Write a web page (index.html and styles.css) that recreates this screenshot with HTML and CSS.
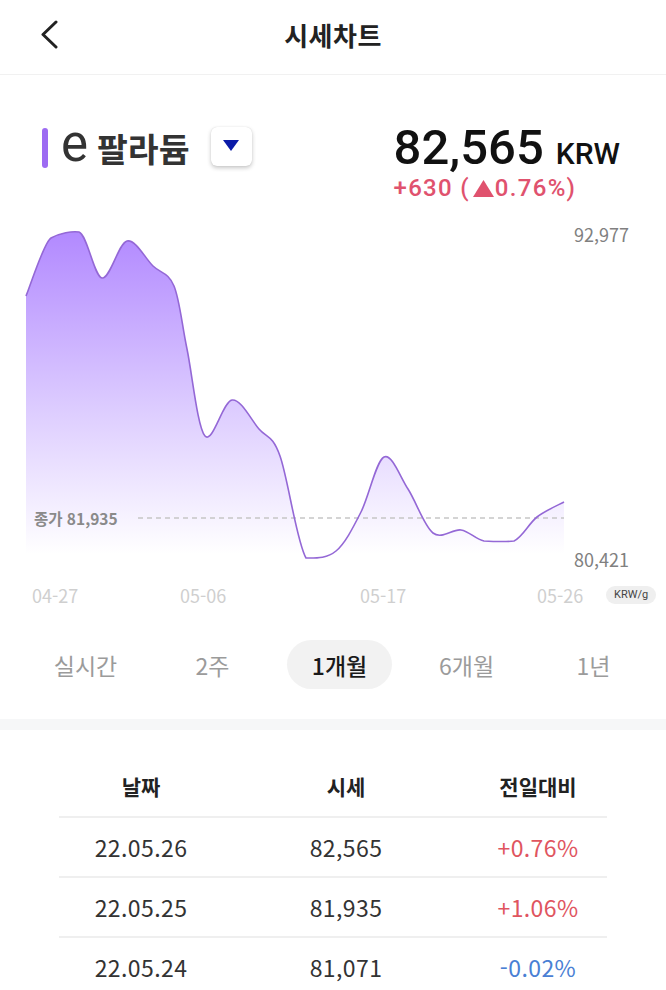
FILE: index.html
```html
<!DOCTYPE html>
<html lang="ko">
<head>
  <meta charset="UTF-8">
  <meta name="viewport" content="width=device-width, initial-scale=1.0">
  <title>시세차트</title>
  <link rel="stylesheet" href="styles.css">
</head>
<body>

  <header class="topbar">
    <a class="back" href="#">
      <svg width="20" height="30" viewBox="0 0 20 30"><path d="M16 3 L3 15.5 L16 28" fill="none" stroke="#222" stroke-width="3" stroke-linecap="round" stroke-linejoin="round"/></svg>
    </a>
    <h1>시세차트</h1>
  </header>

  <section class="asset">
    <div class="asset-name">
      <span class="asset-bar"></span>
      <span class="asset-e">e</span>
      <span class="asset-title">팔라듐</span>
      <button class="asset-select">
        <svg width="16" height="12" viewBox="0 0 16 12"><path d="M0 0 H16 L8 11 Z" fill="#0b1ba8"/></svg>
      </button>
    </div>
    <div class="asset-price">
      <div class="price-main"><span class="price-value">82,565</span><span class="price-unit">KRW</span></div>
      <div class="price-change">+630 (<svg class="tri" width="21" height="17" viewBox="0 0 21 17"><path d="M10.5 0 L21 17 H0 Z" fill="#e0526e"/></svg>0.76%)</div>
    </div>
  </section>

  <section class="chart">
    <svg class="chart-svg" width="666" height="400" viewBox="0 0 666 400">
      <defs>
        <linearGradient id="fill" x1="0" y1="10" x2="0" y2="340" gradientUnits="userSpaceOnUse">
          <stop offset="0" stop-color="#b086ff"/>
          <stop offset="0.55" stop-color="#dccbff"/>
          <stop offset="1" stop-color="#ffffff"/>
        </linearGradient>
      </defs>
      <path d="M26,82 C30.2,72.3 44,28 51,24 C60,19 72,17 79,18 C87.5,21 94,62.5 102,64 C110,65.5 118.5,29 127,27 C135.5,25 145.2,44.5 153,52 C160.8,59.5 168.3,58.2 174,72 C179.7,85.8 181.8,110 187,135 C192.2,160 197.5,213.5 205,222 C212.5,230.5 223,187.2 232,186 C241,184.8 251,205.7 259,215 C267,224.3 272.2,220.5 280,242 C287.8,263.5 296.7,328.2 306,344 C316,344 326.8,344.7 336,337 C345.2,329.3 353,313.7 361,298 C369,282.3 376.2,246.8 384,243 C391.8,239.2 399.8,262.3 408,275 C416.2,287.7 424.2,312.2 433,319 C441.8,325.8 452.5,314.7 461,316 C469.5,317.3 475.2,325.2 484,327 C492.8,327.5 505,328 514,327 C522.8,323 528.7,309.5 537,303 C545.3,296.5 559.5,290.5 564,288 L564,345 L26,345 Z" fill="url(#fill)"/>
      <line x1="138" y1="304" x2="564" y2="304" stroke="#c6c6c6" stroke-width="1.3" stroke-dasharray="5 4"/>
      <path d="M26,82 C30.2,72.3 44,28 51,24 C60,19 72,17 79,18 C87.5,21 94,62.5 102,64 C110,65.5 118.5,29 127,27 C135.5,25 145.2,44.5 153,52 C160.8,59.5 168.3,58.2 174,72 C179.7,85.8 181.8,110 187,135 C192.2,160 197.5,213.5 205,222 C212.5,230.5 223,187.2 232,186 C241,184.8 251,205.7 259,215 C267,224.3 272.2,220.5 280,242 C287.8,263.5 296.7,328.2 306,344 C316,344 326.8,344.7 336,337 C345.2,329.3 353,313.7 361,298 C369,282.3 376.2,246.8 384,243 C391.8,239.2 399.8,262.3 408,275 C416.2,287.7 424.2,312.2 433,319 C441.8,325.8 452.5,314.7 461,316 C469.5,317.3 475.2,325.2 484,327 C492.8,327.5 505,328 514,327 C522.8,323 528.7,309.5 537,303 C545.3,296.5 559.5,290.5 564,288" fill="none" stroke="#9468d6" stroke-width="1.6"/>
    </svg>

    <span class="axis-max">92,977</span>
    <span class="axis-min">80,421</span>
    <span class="close-label">종가 81,935</span>

    <span class="date-label d1">04-27</span>
    <span class="date-label d2">05-06</span>
    <span class="date-label d3">05-17</span>
    <span class="date-label d4">05-26</span>
    <span class="unit-pill">KRW/g</span>
  </section>

  <nav class="periods">
    <a class="period">실시간</a>
    <a class="period">2주</a>
    <a class="period active">1개월</a>
    <a class="period">6개월</a>
    <a class="period">1년</a>
  </nav>

  <div class="divider"></div>

  <section class="history">
    <div class="history-head">
      <span>날짜</span>
      <span>시세</span>
      <span>전일대비</span>
    </div>
    <div class="history-row">
      <span>22.05.26</span>
      <span>82,565</span>
      <span class="up">+0.76%</span>
    </div>
    <div class="history-row">
      <span>22.05.25</span>
      <span>81,935</span>
      <span class="up">+1.06%</span>
    </div>
    <div class="history-row">
      <span>22.05.24</span>
      <span>81,071</span>
      <span class="down">-0.02%</span>
    </div>
  </section>

</body>
</html>
```

FILE: styles.css
```css
* {
  box-sizing: border-box;
}
body {
  margin: 0;
  background: #fff;
  color: #222;
  font-family: "Noto Sans CJK KR", "Noto Sans", sans-serif;
  overflow: hidden;
}

/* top bar */
.topbar {
  position: relative;
  height: 75px;
  padding-bottom: 6px;
  display: flex;
  align-items: center;
  justify-content: center;
  border-bottom: 1px solid #f1f1f1;
}
.back {
  position: absolute;
  left: 40px;
  top: 19px;
  display: flex;
}
.topbar h1 {
  margin: 0;
  font-size: 26px;
  font-weight: 700;
  letter-spacing: 0.5px;
  color: #222;
}

/* asset name + price */
.asset {
  height: 139px;
  display: flex;
  justify-content: space-between;
  align-items: flex-start;
  padding: 0 46px 0 42px;
}
.asset-name {
  display: flex;
  align-items: center;
  margin-top: 53px;
}
.asset-bar {
  width: 6px;
  height: 40px;
  border-radius: 3px;
  background: #9d6bf2;
  margin-right: 13px;
}
.asset-e {
  font-family: Roboto, sans-serif;
  font-size: 51px;
  line-height: 40px;
  color: #333;
  margin-right: 9px;
  margin-top: -8px;
}
.asset-title {
  font-size: 33.5px;
  font-weight: 700;
  color: #333;
  line-height: 40px;
}
.asset-select {
  margin-left: 21px;
  width: 41px;
  height: 39px;
  border: none;
  border-radius: 6px;
  background: #fff;
  box-shadow: 0 2px 4px rgba(0, 0, 0, 0.22), 0 0 1px rgba(0, 0, 0, 0.15);
  display: flex;
  align-items: center;
  justify-content: center;
  padding: 0;
  margin-top: -4px;
}
.asset-price {
  margin-top: 45px;
  font-family: Roboto, sans-serif;
}
.price-main {
  display: flex;
  align-items: baseline;
  color: #111;
  line-height: 56px;
}
.price-value {
  font-size: 49px;
  font-weight: 500;
  margin-right: 12px;
}
.price-unit {
  font-size: 30px;
  font-weight: 500;
}
.price-change {
  display: flex;
  align-items: center;
  font-size: 24px;
  font-weight: 500;
  letter-spacing: 1.3px;
  color: #e0526e;
  line-height: 28px;
  margin-top: -8px;
}
.tri {
  margin: 0 1px 0 3px;
}

/* chart */
.chart {
  position: relative;
  height: 400px;
}
.chart-svg {
  display: block;
}
.axis-max,
.axis-min {
  position: absolute;
  left: 574px;
  font-size: 18px;
  line-height: 20px;
  color: #808080;
}
.axis-max { top: 10px; }
.axis-min { top: 335px; }
.close-label {
  position: absolute;
  left: 34px;
  top: 294px;
  font-size: 15.5px;
  line-height: 20px;
  font-weight: 700;
  color: #8a8a8a;
}
.date-label {
  position: absolute;
  top: 370px;
  font-size: 18px;
  line-height: 22px;
  color: #cfcfcf;
}
.d1 { left: 32px; }
.d2 { left: 180px; }
.d3 { left: 360px; }
.d4 { left: 537px; }
.unit-pill {
  position: absolute;
  left: 606px;
  top: 372px;
  height: 18px;
  padding: 0 8px;
  border-radius: 9px;
  background: #efefef;
  font-family: Roboto, sans-serif;
  font-size: 11px;
  line-height: 18px;
  color: #444;
}

/* period tabs */
.periods {
  display: grid;
  grid-template-columns: repeat(5, 127px);
  padding: 26px 0 30px 22px;
}
.period {
  height: 49px;
  display: flex;
  align-items: center;
  justify-content: center;
  font-size: 23px;
  color: #9b9b9b;
}
.period.active {
  width: 105px;
  justify-self: center;
  border-radius: 25px;
  background: #f2f2f2;
  color: #1a1a1a;
  font-weight: 500;
}

.divider {
  height: 11px;
  background: #f6f7f8;
}

/* history table */
.history {
  margin: 0 59px;
  padding-top: 40px;
}
.history-head,
.history-row {
  display: grid;
  grid-template-columns: 164px 246px 138px;
  text-align: center;
}
.history-head {
  line-height: 32px;
  padding-bottom: 14px;
  font-size: 21px;
  font-weight: 700;
  color: #222;
}
.history-row {
  height: 60px;
  border-top: 2px solid #efefef;
  align-items: center;
  font-size: 23px;
  letter-spacing: 0.4px;
  color: #333;
}
.up { color: #e0555f; }
.down { color: #4a80d4; }
```
